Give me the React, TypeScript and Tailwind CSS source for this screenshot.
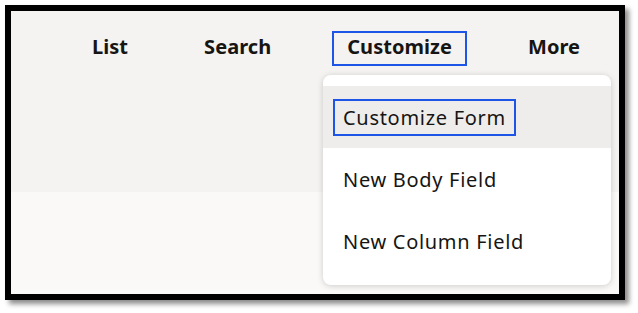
import clsx from "clsx";

const navItems = [
  { label: "List" },
  { label: "Search" },
  { label: "Customize", focused: true },
  { label: "More" },
];

const menuItems = [
  { label: "Customize Form", active: true },
  { label: "New Body Field" },
  { label: "New Column Field" },
];

export default function App() {
  return (
    <div className="h-[313px] w-[638px] overflow-hidden bg-white pl-[5px] pt-[5px] font-['Noto_Sans',sans-serif]">
      <div className="relative flex h-[295px] w-[620px] flex-col border-[6px] border-black shadow-[4px_4px_5px_rgba(0,0,0,0.45)]">
        <div className="h-[181px] shrink-0 bg-[#f4f3f1]">
          <nav className="flex items-center gap-[46px] pl-[66px] pt-[20px]">
            {navItems.map((item) => (
              <span
                key={item.label}
                className={clsx(
                  "block h-[35px] whitespace-nowrap px-[13px] text-[20px] font-bold leading-[28px] tracking-[0.05px] text-[#161513]",
                  item.focused ? "border-2 border-[#1d55e6]" : "border-2 border-transparent"
                )}
              >
                {item.label}
              </span>
            ))}
          </nav>
        </div>
        <div className="flex-1 bg-[#faf9f8]" />

        <div className="absolute left-[312px] top-[64px] w-[288px] rounded-lg bg-white pb-[13px] pt-[11px] shadow-[0_1px_6px_rgba(0,0,0,0.18)]">
          {menuItems.map((item) => (
            <div
              key={item.label}
              className={clsx(
                "flex h-[62px] items-center px-[10px]",
                item.active && "bg-[#eeedeb]"
              )}
            >
              <span
                className={clsx(
                  "block whitespace-nowrap px-[8px] text-[20px] leading-[33px] tracking-[0.7px] text-[#161513]",
                  item.active ? "border-2 border-[#1d55e6]" : "border-2 border-transparent"
                )}
              >
                {item.label}
              </span>
            </div>
          ))}
        </div>
      </div>
    </div>
  );
}
